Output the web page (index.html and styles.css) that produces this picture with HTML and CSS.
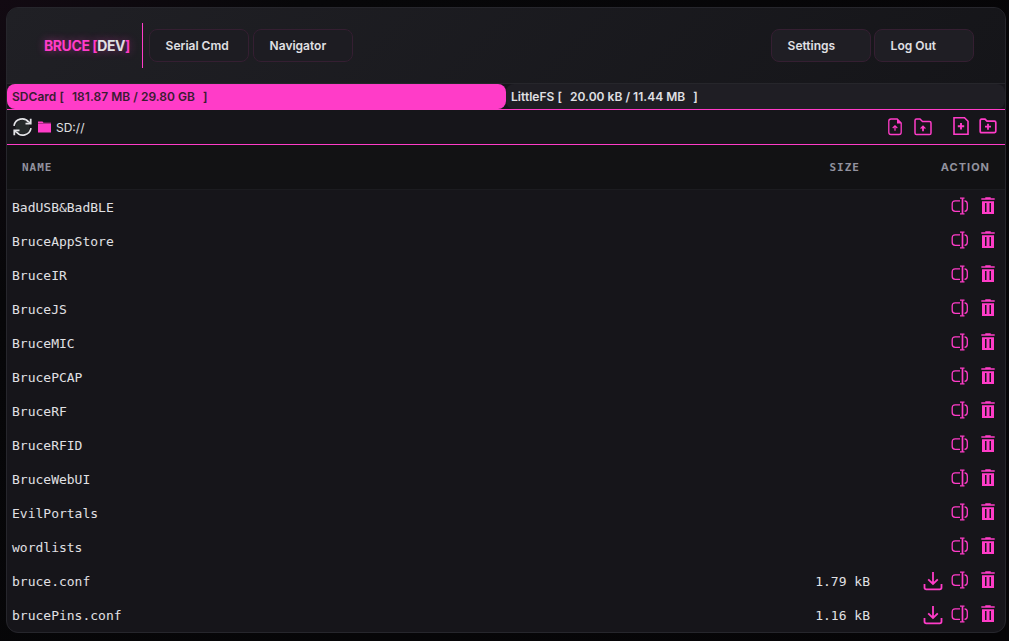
FILE: index.html
```
<!DOCTYPE html>
<html lang="en">
<head>
    <meta charset="UTF-8">
    <meta name="viewport" content="width=device-width, initial-scale=1.0">
    <title>Bruce</title>
    <link rel="stylesheet" href="styles.css">
</head>
<body>
<svg class="sprite" xmlns="http://www.w3.org/2000/svg">
    <symbol id="rename" viewBox="0 0 18 18">
        <path d="M9 3.800H4.200Q1.200 3.800 1.200 7v4.200Q1.200 14.300 4.200 14.300H9M13.500 3.800Q16.300 4 16.300 7v4.200Q16.300 14 13.500 14.300" fill="none" stroke="currentColor" stroke-width="1.300"/>
        <path d="M11.500 1.200v15.600" fill="none" stroke="currentColor" stroke-width="1.700"/>
        <path d="M9 1.200h4.500M9 16.800h4.500" fill="none" stroke="currentColor" stroke-width="1.300"/>
    </symbol>
    <symbol id="trash" viewBox="0 0 14 18">
        <path d="M.3 1.200h4V.3h5.400v.9h4v1.600H.3z" fill="currentColor"/>
        <path fill-rule="evenodd" d="M1 4.200h12V17H1zM4 6v9h1.500V6zM8.500 6v9H10V6z" fill="currentColor"/>
    </symbol>
    <symbol id="download" viewBox="0 0 20 20">
        <path d="M10 1v12M5.200 8.300L10 13l4.800-4.700M1.500 13v3.500Q1.500 18.300 3.300 18.300h13.400Q18.500 18.300 18.500 16.500V13" fill="none" stroke="currentColor" stroke-width="1.800"/>
    </symbol>
</svg>
<div class="container">
    <header class="header">
        <div class="logo">BRUCE [<span>DEV</span>]</div>
        <nav class="menu">
            <button class="btn">Serial Cmd</button>
            <button class="btn">Navigator</button>
        </nav>
        <nav class="menu-right">
            <button class="btn">Settings</button>
            <button class="btn">Log Out</button>
        </nav>
    </header>
    <div class="drives">
        <div class="drive active">SDCard [ <span>181.87 MB / 29.80 GB</span> ]</div>
        <div class="drive">LittleFS [ <span>20.00 kB / 11.44 MB</span> ]</div>
    </div>
    <div class="toolbar">
        <svg class="refresh" width="20" height="20" viewBox="0 0 20 20">
            <circle cx="10.500" cy="10" r="7" fill="#25292a"/>
            <path d="M2 8.800A8.300 8.300 0 0 1 16.800 5.200M19 11.200A8.300 8.300 0 0 1 4.200 14.800" fill="none" stroke="#e2e2e6" stroke-width="1.700"/>
            <path d="M18.700 1.700v5h-5.200M2.300 18.300v-5h5.200" fill="none" stroke="#e2e2e6" stroke-width="1.800"/>
            <path d="M18.700 3.500v3.200h-3.500zM2.300 16.500v-3.200h3.500z" fill="#e2e2e6"/>
        </svg>
        <svg class="folder" width="13" height="12" viewBox="0 0 13 12">
            <path d="M0 .5h4.500l1 1.200H13V11.500H0z" fill="#ff3cc8"/>
            <path d="M0 2.500h13" stroke="#8c286f" stroke-width=".7"/>
        </svg>
        <span class="path">SD://</span>
        <div class="tools">
            <svg class="upload-file" width="14" height="18" viewBox="0 0 14 18">
                <path d="M9.200 1H3Q.8 1 .8 3.200V14.300Q.8 16.500 3 16.500h8Q13.200 16.500 13.200 14.300V5z" fill="none" stroke="currentColor" stroke-width="1.300"/>
                <path d="M9 .8V5.500h4.500z" fill="currentColor"/>
                <path d="M7 12.700V8M4.700 10L7 7.800 9.300 10" fill="none" stroke="currentColor" stroke-width="1.200"/>
            </svg>
            <svg class="upload-folder" width="18" height="18" viewBox="0 0 18 18">
                <path d="M1 2.500Q1 1 2.500 1H6l2.500 2.500h7Q17 3.500 17 5v10Q17 16.600 15.500 16.600h-13Q1 16.600 1 15z" fill="none" stroke="currentColor" stroke-width="1.500"/>
                <path d="M9 13.200V8.500" stroke="currentColor" stroke-width="1.800"/>
                <path d="M5.800 10.600L9 7.200l3.200 3.400z" fill="currentColor"/>
            </svg>
            <svg class="new-file" width="16" height="18" viewBox="0 0 16 18">
                <path d="M1 .8h10.500L15 4.300V17.200H1z" fill="none" stroke="currentColor" stroke-width="1.600"/>
                <path d="M8 6v6.400M4.800 9.200h6.400" stroke="currentColor" stroke-width="1.900"/>
            </svg>
            <svg class="new-folder" width="18" height="16" viewBox="0 0 18 16">
                <path d="M1.200 2.500Q1.200 1.200 2.500 1.200H6l2 2h7.500Q16.800 3.200 16.800 4.500v8.800Q16.800 14.600 15.500 14.600h-13Q1.200 14.600 1.200 13.300z" fill="none" stroke="currentColor" stroke-width="1.700"/>
                <path d="M9 5.700v6M6 8.700h6" stroke="currentColor" stroke-width="1.800"/>
            </svg>
        </div>
    </div>
    <div class="thead">
        <div class="col-name">NAME</div>
        <div class="col-size">SIZE</div>
        <div class="col-action">ACTION</div>
    </div>
    <div class="files" id="files"></div>
</div>
<script src="script.js"></script>
</body>
</html>
```
FILE: styles.css
```
* {
    box-sizing: border-box;
}

body {
    margin: 0;
    height: 641px;
    padding: 7px 3px 8px 6px;
    overflow: hidden;
    background: radial-gradient(circle at 0 0, #120a12 0, #070709 300px, #060507 100%);
    color: #e0e0e4;
    font-family: Inter, sans-serif;
    font-size: 13px;
}

.sprite {
    display: none;
}

.container {
    height: 626px;
    border: 1px solid #26262c;
    border-radius: 12px;
    background: #16151a;
    overflow: hidden;
}

/* Header */
.header {
    display: flex;
    align-items: center;
    height: 76px;
    padding: 0 31px 0 37px;
    border-bottom: 1px solid #26262b;
    background: linear-gradient(135deg, #202025, #151519);
}

.logo {
    display: flex;
    align-items: center;
    width: 99px;
    height: 45px;
    border-right: 1px solid #ff3cc8;
    color: #ff3cc8;
    font-size: 14px;
    font-weight: 700;
    letter-spacing: -0.42px;
    white-space: pre;
    text-shadow: 0 0 8px rgba(255, 60, 200, 0.45);
}

.logo span {
    color: #e0e0e4;
}

.menu,
.menu-right {
    display: flex;
    gap: 4px;
}

.menu {
    margin-left: 6px;
}

.menu-right {
    gap: 3px;
    margin-left: auto;
}

.btn {
    width: 100px;
    height: 33px;
    padding: 0 15.6px;
    border: 1px solid #351f32;
    border-radius: 8px;
    background: #1f1e24;
    color: #e0e0e4;
    font-family: inherit;
    font-size: 12px;
    font-weight: 600;
    text-align: left;
    white-space: nowrap;
}

.menu .btn {
    background: #1d1c22;
}

/* Drives */
.drives {
    display: flex;
    height: 26px;
    border-bottom: 1px solid #ff3cc8;
}

.drive {
    flex: 1;
    padding-left: 5px;
    border-radius: 8px;
    background: #1f1e24;
    font-size: 12px;
    font-weight: 600;
    letter-spacing: 0.03px;
    line-height: 25px;
}

.drive span {
    margin: 0 5px;
}

.drive.active {
    background: #ff3cc8;
    color: #3a1c32;
}

/* Toolbar */
.toolbar {
    display: flex;
    align-items: center;
    height: 35px;
    padding: 0 8px 0 5px;
    border-bottom: 1px solid #ff3cc8;
    font-size: 12px;
}

.folder {
    margin: 0 5px 0 6px;
}

.tools {
    display: flex;
    align-items: center;
    margin-left: auto;
    color: #ff3cc8;
}

.upload-folder {
    margin-left: 12px;
}

.new-file {
    margin-left: 21px;
    margin-bottom: 2px;
}

.new-folder {
    margin-left: 10px;
    margin-bottom: 2px;
}

/* File list */
.thead {
    display: flex;
    align-items: center;
    height: 45px;
    border-bottom: 1px solid #1c1c20;
    background: #121214;
    color: #92929f;
    font-size: 11px;
    font-weight: 700;
    letter-spacing: 1px;
}

.thead .col-name,
.thead .col-size {
    font-family: "DejaVu Sans Mono", monospace;
}

.thead .col-name {
    padding-left: 15px;
}

.thead .col-size {
    padding-right: 10px;
}

.row {
    display: flex;
    align-items: center;
    height: 34px;
    font-family: "DejaVu Sans Mono", monospace;
    font-size: 13px;
}

.col-name {
    flex: 1;
    padding-left: 5px;
}

.col-size {
    width: 100px;
    text-align: right;
}

.col-action {
    display: flex;
    align-items: center;
    justify-content: flex-end;
    width: 135px;
    padding-right: 10px;
    color: #ff3cc8;
}

.thead .col-action {
    padding-right: 15px;
    color: #92929f;
}

.icon-download {
    width: 20px;
    height: 20px;
    margin-right: 8px;
}

.icon-rename {
    width: 18px;
    height: 18px;
    margin-right: 12px;
}

.icon-trash {
    width: 14px;
    height: 18px;
}

.icon-rename,
.icon-trash {
    margin-bottom: 2px;
}
```
FILE: script.js
```
const files = [
    ["BadUSB&BadBLE"],
    ["BruceAppStore"],
    ["BruceIR"],
    ["BruceJS"],
    ["BruceMIC"],
    ["BrucePCAP"],
    ["BruceRF"],
    ["BruceRFID"],
    ["BruceWebUI"],
    ["EvilPortals"],
    ["wordlists"],
    ["bruce.conf", "1.79 kB"],
    ["brucePins.conf", "1.16 kB"]
];

function icon(name) {
    return `<svg class="icon-${name}"><use href="#${name}"></use></svg>`;
}

document.getElementById("files").innerHTML = files.map(([name, size]) => `
    <div class="row">
        <div class="col-name">${name.replace("&", "&amp;")}</div>
        <div class="col-size">${size || ""}</div>
        <div class="col-action">${size ? icon("download") : ""}${icon("rename")}${icon("trash")}</div>
    </div>`).join("");
```
